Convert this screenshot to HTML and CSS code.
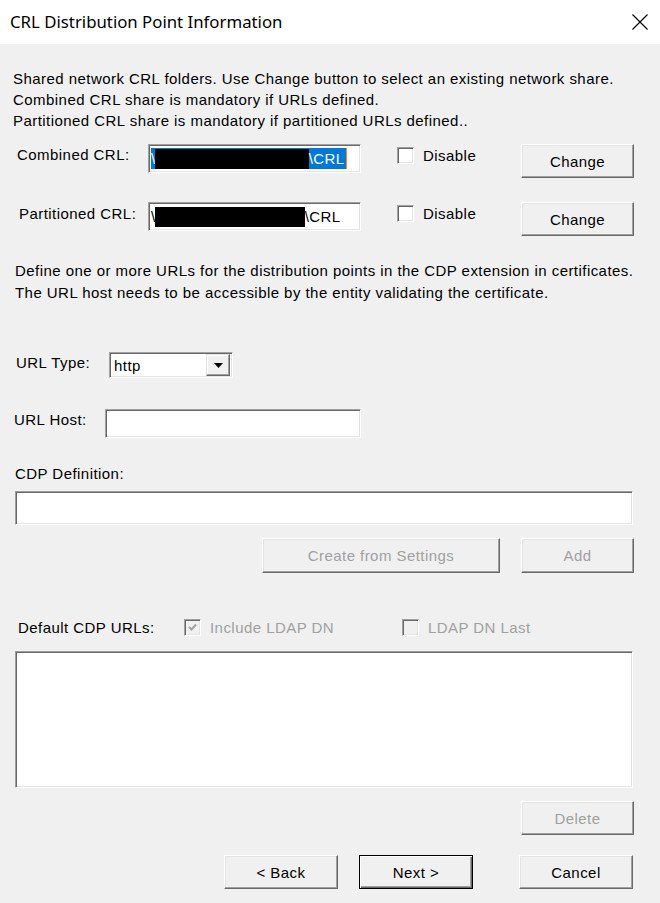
FILE: index.html
```html
<!DOCTYPE html>
<html>
<head>
<meta charset="utf-8">
<link rel="stylesheet" href="styles.css">
</head>
<body>
<div class="dialog">
  <div class="titlebar">
    <span class="title">CRL Distribution Point Information</span>
    <svg class="close" width="16" height="16" viewBox="0 0 16 16"><path d="M0.5 0.5 L15.5 15.5 M15.5 0.5 L0.5 15.5" stroke="#000" stroke-width="1.1" fill="none"/></svg>
  </div>
  <div class="content">
    <p class="intro">Shared network CRL folders. Use Change button to select an existing network share.<br>Combined CRL share is mandatory if URLs defined.<br>Partitioned CRL share is mandatory if partitioned URLs defined..</p>

    <div class="row share-row first">
      <span class="lbl lbl-comb">Combined CRL:</span>
      <div class="field share"><span class="sel">\<span class="redact r1"></span>\CRL</span><span class="caret"></span></div>
      <div class="chk-group"><span class="chk"></span><span class="chk-text">Disable</span></div>
      <button class="btn w113 h34">Change</button>
    </div>

    <div class="row share-row second">
      <span class="lbl lbl-part">Partitioned CRL:</span>
      <div class="field share"><span class="plain">\<span class="redact r2"></span>\CRL</span></div>
      <div class="chk-group"><span class="chk"></span><span class="chk-text">Disable</span></div>
      <button class="btn w113 h34">Change</button>
    </div>

    <p class="define">Define one or more URLs for the distribution points in the CDP extension in certificates.<br>The URL host needs to be accessible by the entity validating the certificate.</p>

    <div class="row type-row">
      <span class="lbl lbl-type">URL Type:</span>
      <div class="field combo"><span class="combo-text">http</span><span class="drop"><svg width="9" height="5" viewBox="0 0 9 5"><path d="M0 0 H9 L4.5 5 Z" fill="#000"/></svg></span></div>
    </div>

    <div class="row host-row">
      <span class="lbl lbl-host">URL Host:</span>
      <div class="field host"></div>
    </div>

    <div class="cdp-label">CDP Definition:</div>
    <div class="field cdp"></div>

    <div class="row cdp-buttons">
      <button class="btn disabled create">Create from Settings</button>
      <button class="btn disabled w113 add">Add</button>
    </div>

    <div class="row default-row">
      <span class="lbl lbl-def">Default CDP URLs:</span>
      <span class="chk dis checked"><svg width="11" height="11" viewBox="0 0 11 11"><path d="M2 5 L4.5 7.5 L9 2.5" stroke="#a0a0a0" stroke-width="2" fill="none"/></svg></span>
      <span class="chk-text dis-text inc">Include LDAP DN</span>
      <span class="chk dis last"></span>
      <span class="chk-text dis-text">LDAP DN Last</span>
    </div>

    <div class="field listbox"></div>

    <div class="row delete-row">
      <button class="btn disabled w113 h34">Delete</button>
    </div>

    <div class="row nav-row">
      <button class="btn nav">&lt; Back</button>
      <button class="btn nav default">Next &gt;</button>
      <button class="btn nav cancel">Cancel</button>
    </div>
  </div>
</div>
</body>
</html>
```

FILE: styles.css
```css
html, body {
  margin: 0;
  padding: 0;
}
body {
  width: 660px;
  height: 903px;
  background: #f0f0f0;
  font-family: "Liberation Sans", Arial, sans-serif;
  font-size: 15px;
  letter-spacing: 0.45px;
  color: #000;
  overflow: hidden;
}
.dialog {
  width: 660px;
  height: 903px;
}
.titlebar {
  height: 44px;
  background: #fff;
  display: flex;
  align-items: center;
  justify-content: space-between;
  padding: 0 12px 0 10px;
  box-sizing: border-box;
  letter-spacing: 0;
}
.title {
  font-family: "Noto Sans", "Open Sans", sans-serif;
  font-size: 16.8px;
  margin-top: -1px;
}
.close {
  margin-top: -1px;
}
.content {
  display: flex;
  flex-direction: column;
}
p {
  margin: 0;
}
.intro {
  margin: 24px 0 0 13px;
  line-height: 21px;
}
.row {
  display: flex;
  align-items: flex-start;
}
.lbl {
  line-height: 21px;
  flex: none;
}
.share-row.first { margin-top: 13px; }
.share-row.second { margin-top: 24px; }
.lbl-comb { margin-left: 17px; width: 131px; }
.lbl-part { margin-left: 19px; width: 129px; margin-top: 1px; }

.field {
  background: #fff;
  border: 1px solid;
  border-color: #a0a0a0 #fff #fff #a0a0a0;
  box-shadow: inset 1px 1px #696969, inset -1px -1px #e3e3e3;
  box-sizing: border-box;
  flex: none;
}
.share {
  width: 213px;
  height: 29px;
  padding: 3px 0 0 2px;
  display: flex;
  align-items: flex-start;
}
.sel, .plain {
  display: inline-flex;
  align-items: center;
  height: 21px;
  line-height: 21px;
  padding-right: 1px;
}
.sel {
  background: #0078d7;
  color: #fff;
}
.redact {
  display: inline-block;
  background: #000;
  height: 20px;
  margin-left: -1px;
}
.r1 { width: 154px; }
.r2 { width: 150px; }
.caret {
  width: 1px;
  height: 21px;
  background: #ff8c00;
}
.chk-group {
  width: 124px;
  margin-left: 36px;
  display: flex;
  align-items: center;
  margin-top: 3px;
  flex: none;
}
.chk {
  width: 17px;
  height: 17px;
  background: #fff;
  border: 1px solid;
  border-color: #a0a0a0 #fff #fff #a0a0a0;
  box-shadow: inset 1px 1px #696969, inset -1px -1px #e3e3e3;
  box-sizing: border-box;
  flex: none;
  display: flex;
  align-items: center;
  justify-content: center;
}
.chk-text {
  margin-left: 9px;
  line-height: 17px;
}
.btn {
  font-family: "Liberation Sans", Arial, sans-serif;
  font-size: 15px;
  letter-spacing: 0.45px;
  color: #000;
  background: #f0f0f0;
  border: 1px solid;
  border-color: #fff #696969 #696969 #fff;
  box-shadow: inset -1px -1px #a0a0a0, inset 1px 1px #e3e3e3;
  box-sizing: border-box;
  padding: 0;
  flex: none;
  margin: 0;
}
.w113 { width: 113px; }
.h34 { height: 34px; }
.btn.disabled { color: #a0a0a0; }

.define {
  margin: 24px 0 0 15px;
  line-height: 22px;
}
.type-row { margin-top: 48px; }
.lbl-type { margin-left: 16px; width: 93px; }
.combo {
  width: 124px;
  height: 26px;
  display: flex;
  align-items: center;
  justify-content: space-between;
  padding: 2px;
}
.combo-text {
  padding-left: 2px;
  line-height: 21px;
}
.drop {
  width: 24px;
  height: 22px;
  background: #f0f0f0;
  border: 1px solid;
  border-color: #e3e3e3 #696969 #696969 #e3e3e3;
  box-shadow: inset -1px -1px #a0a0a0, inset 1px 1px #fff;
  box-sizing: border-box;
  display: flex;
  align-items: center;
  justify-content: center;
}
.host-row { margin-top: 31px; }
.lbl-host { margin-left: 14px; width: 91px; }
.host {
  width: 256px;
  height: 29px;
}
.cdp-label {
  margin: 25px 0 0 15px;
  line-height: 21px;
}
.cdp {
  margin: 7px 0 0 15px;
  width: 618px;
  height: 34px;
}
.cdp-buttons { margin-top: 13px; }
.create {
  margin-left: 262px;
  width: 238px;
  height: 35px;
}
.add {
  margin-left: 21px;
  height: 35px;
}
.default-row {
  margin-top: 44px;
  align-items: center;
}
.lbl-def { margin-left: 18px; width: 166px; }
.chk.dis {
  background: #f0f0f0;
}
.dis-text { color: #a0a0a0; }
.inc { width: 192px; flex: none; }
.listbox {
  margin: 13px 0 0 15px;
  width: 618px;
  height: 137px;
}
.delete-row {
  margin-top: 13px;
  padding-left: 521px;
}
.nav-row { margin-top: 20px; }
.nav {
  width: 114px;
  height: 34px;
  margin-left: 224px;
}
.nav.default {
  margin-left: 21px;
  border: 1px solid #000;
  box-shadow: inset 1px 1px #fff, inset -1px -1px #696969, inset -2px -2px #a0a0a0;
}
.nav.cancel {
  margin-left: 46px;
}
```
